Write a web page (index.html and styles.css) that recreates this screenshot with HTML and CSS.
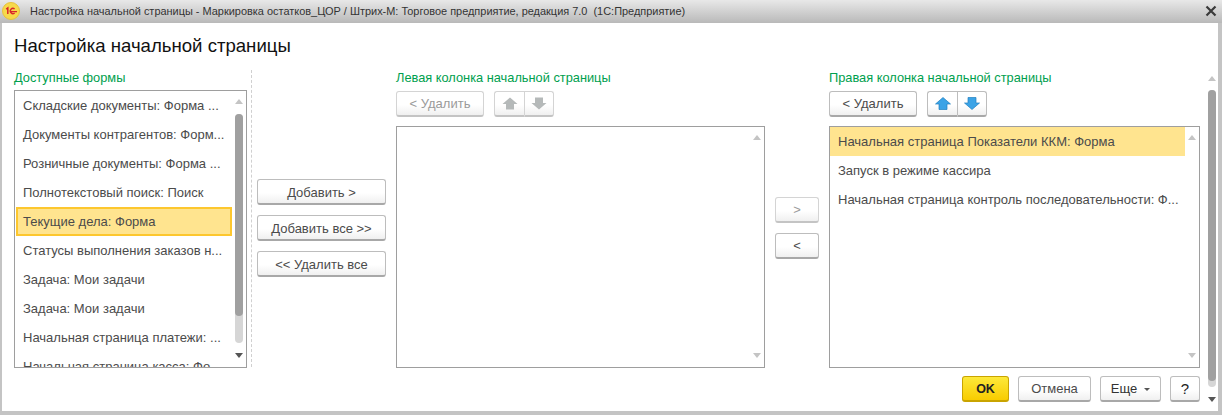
FILE: index.html
```html
<!DOCTYPE html>
<html lang="ru">
<head>
<meta charset="utf-8">
<title>Настройка начальной страницы</title>
<link rel="stylesheet" href="styles.css">
</head>
<body>
<div class="window">
  <header class="titlebar">
    <svg class="logo" width="18" height="18" viewBox="0 0 18 18"><circle cx="9" cy="9" r="8.5" fill="#f7d94a" stroke="#e6c23c"/><path d="M4.2 7.2 L5.8 6 V12" fill="none" stroke="#d8262c" stroke-width="1.5"/><path d="M12.6 7 A2.6 2.6 0 1 0 12.6 11 M8 9.6 H15" fill="none" stroke="#d8262c" stroke-width="1.4"/></svg>
    <span class="title-text">Настройка начальной страницы - Маркировка остатков_ЦОР / Штрих-М: Торговое предприятие, редакция 7.0&nbsp; (1С:Предприятие)</span>
    <svg class="close" width="12" height="12" viewBox="0 0 12 12"><path d="M1.5 1.5 L10.5 10.5 M10.5 1.5 L1.5 10.5" stroke="#3a3a3a" stroke-width="2.2"/></svg>
  </header>
  <main class="body">
    <h1 class="heading">Настройка начальной страницы</h1>
    <div class="columns">
      <section class="col col-avail">
        <div class="label">Доступные формы</div>
        <div class="list list-full">
          <ul class="items">
            <li class="item">Складские документы: Форма ...</li>
            <li class="item">Документы контрагентов: Форм...</li>
            <li class="item">Розничные документы: Форма ...</li>
            <li class="item">Полнотекстовый поиск: Поиск</li>
            <li class="item item-focus">Текущие дела: Форма</li>
            <li class="item">Статусы выполнения заказов н...</li>
            <li class="item">Задача: Мои задачи</li>
            <li class="item">Задача: Мои задачи</li>
            <li class="item">Начальная страница платежи: ...</li>
            <li class="item">Начальная страница касса: Фо...</li>
          </ul>
          <div class="vscroll">
            <span class="arrow-up"></span>
            <div class="track"><div class="thumb"></div></div>
            <span class="arrow-down dark"></span>
          </div>
        </div>
      </section>
      <div class="separator"></div>
      <div class="actions actions-add">
        <button class="btn wide">Добавить &gt;</button>
        <button class="btn wide">Добавить все &gt;&gt;</button>
        <button class="btn wide">&lt;&lt; Удалить все</button>
      </div>
      <section class="col col-left">
        <div class="label">Левая колонка начальной страницы</div>
        <div class="toolbar">
          <button class="btn del" disabled>&lt; Удалить</button>
          <div class="pair">
            <button class="btn sq" disabled><svg width="16" height="13" viewBox="0 0 16 13"><path d="M8 .5 L15.5 7 H12 V12.5 H4 V7 H.5 Z" fill="#b5b9b9"/></svg></button>
            <button class="btn sq" disabled><svg width="16" height="13" viewBox="0 0 16 13"><path d="M8 12.5 L15.5 6 H12 V.5 H4 V6 H.5 Z" fill="#b5b9b9"/></svg></button>
          </div>
        </div>
        <div class="list list-short">
          <ul class="items"></ul>
          <div class="vscroll">
            <span class="arrow-up"></span>
            <div class="track"></div>
            <span class="arrow-down"></span>
          </div>
        </div>
      </section>
      <div class="actions actions-move">
        <button class="btn mv" disabled>&gt;</button>
        <button class="btn mv">&lt;</button>
      </div>
      <section class="col col-right">
        <div class="label">Правая колонка начальной страницы</div>
        <div class="toolbar">
          <button class="btn del">&lt; Удалить</button>
          <div class="pair">
            <button class="btn sq"><svg width="16" height="13" viewBox="0 0 16 13"><path d="M8 .5 L15.5 7 H12 V12.5 H4 V7 H.5 Z" fill="#3ba3e6" stroke="#1f7fc0" stroke-width=".7"/></svg></button>
            <button class="btn sq"><svg width="16" height="13" viewBox="0 0 16 13"><path d="M8 12.5 L15.5 6 H12 V.5 H4 V6 H.5 Z" fill="#3ba3e6" stroke="#1f7fc0" stroke-width=".7"/></svg></button>
          </div>
        </div>
        <div class="list list-short">
          <ul class="items items-right">
            <li class="item item-current">Начальная страница Показатели ККМ: Форма</li>
            <li class="item">Запуск в режиме кассира</li>
            <li class="item">Начальная страница контроль последовательности: Ф...</li>
          </ul>
          <div class="vscroll">
            <span class="arrow-up"></span>
            <div class="track"></div>
            <span class="arrow-down"></span>
          </div>
        </div>
      </section>
    </div>
    <footer class="footer">
      <button class="btn ok">OK</button>
      <button class="btn cancel">Отмена</button>
      <button class="btn more">Еще<span class="caret"></span></button>
      <button class="btn help">?</button>
    </footer>
    <div class="page-scroll">
      <span class="arrow-up"></span>
      <div class="track"><div class="thumb thumb-page"></div></div>
      <span class="arrow-down dark"></span>
    </div>
  </main>
</div>
</body>
</html>
```
FILE: styles.css
```css
* { box-sizing: border-box; }
html, body { margin: 0; padding: 0; height: 100%; overflow: hidden; background: #c4c4c4; }
body { font-family: "Liberation Sans", Arial, sans-serif; font-size: 13px; color: #4b4b4b; }
.window { height: 415px; display: flex; flex-direction: column; }
.titlebar {
  height: 23px; flex: none; display: flex; align-items: center; padding: 0 4px 2px 2px;
  background: linear-gradient(#e8e8e8, #b9b9b9);
}
.logo { flex: none; }
.title-text { margin-left: 10px; flex: 1; font-size: 10.95px; color: #333; white-space: nowrap; }
.close { flex: none; margin-right: 1px; }
.body {
  position: relative; flex: none; height: 388px; margin: 0 4px 0 2px; background: #fff;
  padding: 0 0 0 12px; display: flex; flex-direction: column;
}
.heading { margin: 13px 0 0; height: 20px; font-size: 18.6px; line-height: 20px; font-weight: 400; color: #111; }
.columns { display: flex; flex: none; margin-top: 14px; height: 298px; }
.col { display: flex; flex-direction: column; flex: none; }
.col-avail { width: 233px; }
.col-left { width: 369px; }
.col-right { width: 371px; }
.label { flex: none; height: 19px; line-height: 14px; margin-top: 1px; color: #00a04e; font-size: 12.8px; white-space: nowrap; }
.separator { flex: none; width: 0; margin: 0 5px 0 4px; border-left: 1px dashed #d0d0d0; height: 297px; }
.toolbar { flex: none; display: flex; gap: 10px; margin: 1px 0 9px; height: 26px; }
.list { flex: none; border: 1px solid #9e9e9e; display: flex; background: #fff; overflow: hidden; }
.list-full { height: 278px; }
.list-short { height: 242px; }
.items { list-style: none; margin: 0; padding: 0 0 0 1px; flex: 1; min-width: 0; }
.item { height: 29px; line-height: 29px; padding-left: 7px; white-space: nowrap; overflow: hidden; }
.item-focus { background: #ffe48f; border: 2px solid #fdc72e; padding-left: 5px; line-height: 25px; }
.item-current { background: #ffe48f; }
.items-right { padding: 0; }
.items-right .item { padding-left: 8px; }
.vscroll { flex: none; width: 14px; display: flex; flex-direction: column; align-items: center; padding: 8px 0 9px; }
.track { flex: 1; width: 8px; margin: 10px 0; border-radius: 4px; position: relative; }
.list-full .track { background: #d6d6d6; }
.thumb { position: absolute; left: 0; top: 0; width: 8px; height: 202px; border-radius: 4px; background: #a0a0a0; }
.arrow-up, .arrow-down { flex: none; width: 0; height: 0; border-left: 4px solid transparent; border-right: 4px solid transparent; }
.arrow-up { border-bottom: 5px solid #c4c4c4; }
.arrow-down { border-top: 5px solid #c4c4c4; }
.arrow-down.dark { border-top-color: #555; }
.btn {
  font-family: inherit; font-size: 13px; color: #4b4b4b; padding: 0; height: 26px; cursor: default;
  background: linear-gradient(#fff 55%, #f0f0f0); border: 1px solid #bdbdbd; border-bottom: 2px solid #a8a8a8; border-radius: 3px;
}
.btn:disabled { color: #9a9a9a; border-color: #d4d4d4; border-bottom-color: #c4c4c4; }
.actions { flex: none; display: flex; flex-direction: column; }
.actions-add { width: 129px; margin-right: 10px; gap: 10px; padding-top: 109px; }
.actions-move { width: 44px; margin: 0 10px; gap: 10px; padding-top: 127px; }
.wide { width: 129px; padding-top: 2px; }
.mv { width: 44px; }
.del { width: 88px; }
.pair { display: flex; }
.sq { width: 30px; display: flex; align-items: center; justify-content: center; }
.sq:first-child { border-radius: 3px 0 0 3px; border-right: 0; }
.sq:last-child { border-radius: 0 3px 3px 0; }
.footer { flex: none; display: flex; justify-content: flex-end; gap: 9px; margin-top: 8px; padding-right: 18px; }
.ok { width: 47px; background: linear-gradient(#fde93a, #f8cc00); border-color: #c9a400; color: #222; font-weight: 700; font-size: 12.5px; }
.cancel { width: 73px; }
.more { width: 61px; color: #333; }
.caret { display: inline-block; margin-left: 7px; vertical-align: 2px; width: 0; height: 0; border-left: 3px solid transparent; border-right: 3px solid transparent; border-top: 3px solid #555; }
.help { width: 30px; color: #222; font-size: 15px; }
.page-scroll { position: absolute; right: 1px; top: 53px; bottom: 0; width: 10px; display: flex; flex-direction: column; align-items: center; padding-bottom: 9px; }
.page-scroll .track { margin: 9px 0 10px; background: #d6d6d6; }
.thumb-page { height: auto; bottom: 6px; }
```
